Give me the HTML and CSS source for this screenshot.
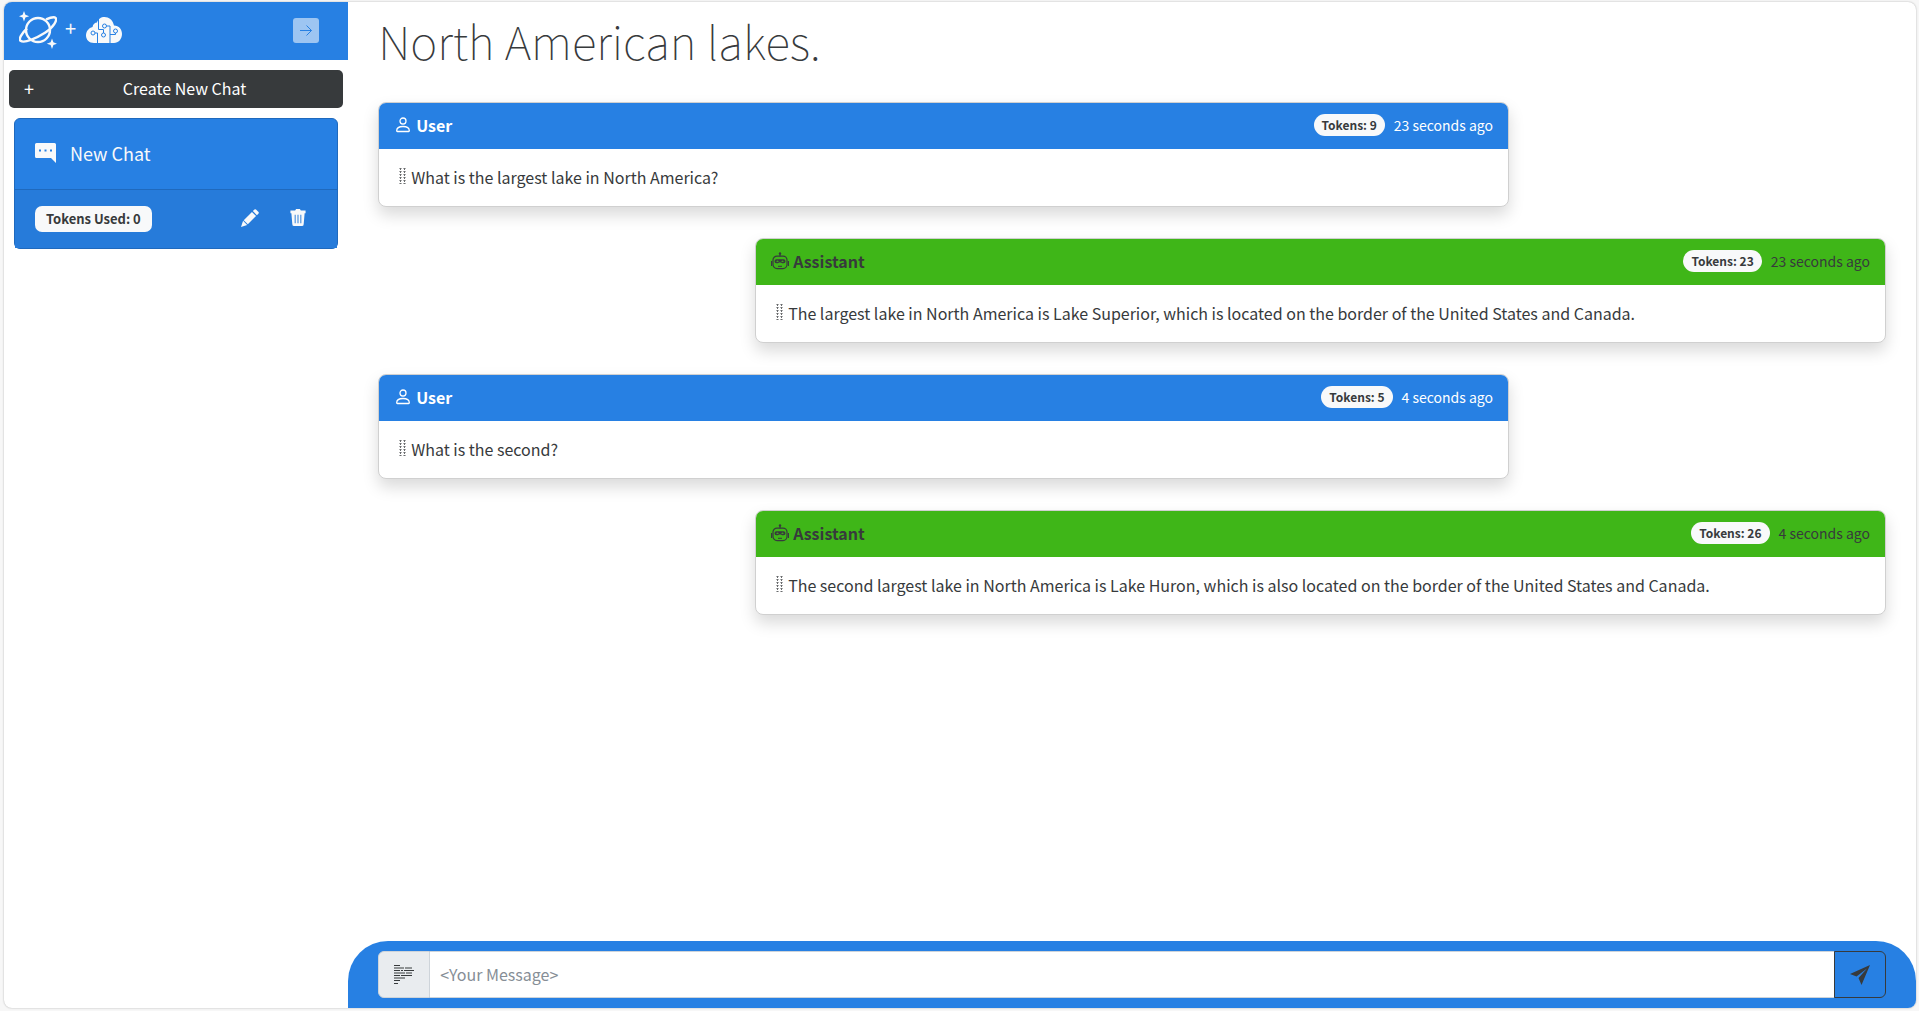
FILE: index.html
```html
<!DOCTYPE html>
<html lang="en">
<head>
<meta charset="utf-8">
<title>Chat</title>
<link rel="stylesheet" href="styles.css">
</head>
<body>
<svg class="sprite" aria-hidden="true">
  <symbol id="person" viewBox="0 0 18 18"><g fill="none" stroke="currentColor" stroke-width="1.300"><circle cx="9" cy="5" r="3"/><path d="M2.700 14.800c0-2.800 2-4.300 6.300-4.300s6.300 1.500 6.300 4.300q0 .7-.7.700H3.400q-.7 0-.7-.7z"/></g></symbol>
  <symbol id="robot" viewBox="0 0 18 18"><g fill="none" stroke="currentColor" stroke-width="1.200"><path d="M9 4.500V1.500"/><rect x="2" y="4.100" width="14" height="12.500" rx="4"/><path d="M.6 9v5M17.400 9v5"/><path d="M7 14.300h4" stroke-width="1"/></g><circle cx="9" cy="1.500" r="1.200"/><path fill-rule="evenodd" d="M5.500 7.300h7a1.900 1.900 0 0 1 0 4c-1.600 0-2.200-.8-3.500-.8s-1.900.8-3.500.8a1.900 1.900 0 0 1 0-4M5 9.200l1.500.8L8 9.200l-1.500-.6zm5 0 1.500.8 1.500-.8-1.500-.6z"/></symbol>
  <symbol id="grip" viewBox="0 0 7 17"><path opacity=".75" d="M1 0h1v2H1zM5 0h1v2H5zM1 3h1v2H1zM5 3h1v2H5zM1 6h1v2H1zM5 6h1v2H5zM1 9h1v2H1zM5 9h1v2H5zM1 12h1v2H1zM5 12h1v2H5zM1 15h1v1H1zM5 15h1v1H5z"/><path opacity=".4" d="M0 0h1v1H0zM2 0h1v1H2zM4 0h1v1H4zM6 0h1v1H6zM0 3h1v1H0zM2 3h1v1H2zM4 3h1v1H4zM6 3h1v1H6zM0 6h1v1H0zM2 6h1v1H2zM4 6h1v1H4zM6 6h1v1H6zM0 9h1v1H0zM2 9h1v1H2zM4 9h1v1H4zM6 9h1v1H6zM0 12h1v1H0zM2 12h1v1H2zM4 12h1v1H4zM6 12h1v1H6zM0 15h1v1H0zM2 15h1v1H2zM4 15h1v1H4zM6 15h1v1H6z"/></symbol>
</svg>
<div class="app">
  <aside class="sidebar">
    <header class="brand">
      <svg class="planet" viewBox="0 0 38 38"><g fill="none" stroke="currentColor" stroke-width="2.400"><circle cx="19" cy="19" r="12"/><path d="M8 17.500C2.500 22.500-.5 28 1.500 29.800c4 2.700 15.500-2.300 24.500-8s12.500-13 10.500-15c-1.500-1.300-5-.3-9.500 1.500"/></g><path fill="currentColor" d="M5 0l1.400 3.800 3.800 1.400-3.800 1.400L5 10.400 3.600 6.600 0 5.200l3.600-1.400zM33 27.500l1.400 3.800 3.800 1.400-3.800 1.400-1.400 3.800-1.400-3.800-3.800-1.400 3.800-1.400z"/></svg>
      <span class="plus">+</span>
      <svg class="brain" viewBox="0 0 36 26"><path fill="currentColor" d="M8 26C3 26 0 22.500 0 18.500 0 14 3 11 6.500 10 7 7 9 5.500 11 5.500 12 2 15 0 18.500 0 23 0 26.500 3 27.500 7c.5 1 .5 1.500.5 1.500C33 8.500 36 12.500 36 17c0 5-3.500 9-8 9z"/><g fill="none" stroke="#2780e3"><path d="M12.500 1v11.500h5V16M11.500 26V16H9M20.500 9H24v17M24 17.500h5.500V16"/><circle cx="7" cy="16" r="2"/><circle cx="17.500" cy="18" r="2"/><circle cx="18.500" cy="9" r="2"/><circle cx="29.500" cy="14" r="2"/></g></svg>
      <button class="collapse" aria-label="Collapse sidebar"><svg viewBox="0 0 26 25"><path fill="none" stroke="#2780e3" d="M7 12.500h11.500M13.500 7.500l5 5-5 5"/></svg></button>
    </header>
    <button class="create"><span class="create-plus">+</span><span class="create-label">Create New Chat</span></button>
    <section class="chat">
      <div class="chat-top">
        <svg class="bubble" viewBox="0 0 21 20"><path fill="currentColor" fill-rule="evenodd" d="M1.500 0h18A1.500 1.500 0 0 1 21 1.500V20l-5-5H1.500A1.500 1.500 0 0 1 0 13.500v-12A1.500 1.500 0 0 1 1.500 0M4 6.500v2h2v-2zm5.500 0v2h2v-2zm5.500 0v2h2v-2z"/></svg>
        <span>New Chat</span>
      </div>
      <div class="chat-tools">
        <span class="badge used">Tokens Used: 0</span>
        <button class="tool" aria-label="Rename"><svg viewBox="0 0 19 19"><path fill="currentColor" d="M14.200.5q.8-.7 1.600 0l2.700 2.700q.7.800 0 1.600L16.800 6.500 12.500 2.200zM11.600 3.100l4.300 4.300-8.700 8.700-4.300-4.300zM2.200 12.500l4.300 4.300L0 19z"/></svg></button>
        <button class="tool" aria-label="Delete"><svg viewBox="0 0 16 19"><path fill="currentColor" fill-rule="evenodd" d="M0 1.500h5L6 0h4l1 1.500h5v3h-1L14 16a2 2 0 0 1-2 2H4a2 2 0 0 1-2-2L1 4.500H0zM4.500 6v9h1V6zm3 0v9h1V6zm3 0v9h1V6z"/></svg></button>
      </div>
    </section>
  </aside>
  <main class="main">
    <div class="thread">
      <h1>North American lakes.</h1>
      <article class="msg user">
        <header><svg class="who"><use href="#person"/></svg><strong>User</strong><span class="badge">Tokens: 9</span><time>23 seconds ago</time></header>
        <p><svg class="grip"><use href="#grip"/></svg>What is the largest lake in North America?</p>
      </article>
      <article class="msg assistant">
        <header><svg class="who"><use href="#robot"/></svg><strong>Assistant</strong><span class="badge">Tokens: 23</span><time>23 seconds ago</time></header>
        <p><svg class="grip"><use href="#grip"/></svg>The largest lake in North America is Lake Superior, which is located on the border of the United States and Canada.</p>
      </article>
      <article class="msg user">
        <header><svg class="who"><use href="#person"/></svg><strong>User</strong><span class="badge">Tokens: 5</span><time>4 seconds ago</time></header>
        <p><svg class="grip"><use href="#grip"/></svg>What is the second?</p>
      </article>
      <article class="msg assistant">
        <header><svg class="who"><use href="#robot"/></svg><strong>Assistant</strong><span class="badge">Tokens: 26</span><time>4 seconds ago</time></header>
        <p><svg class="grip"><use href="#grip"/></svg>The second largest lake in North America is Lake Huron, which is also located on the border of the United States and Canada.</p>
      </article>
    </div>
    <form class="composer">
      <label for="message" aria-label="Your message"><svg viewBox="0 0 20 20"><path fill="none" stroke="currentColor" stroke-width="1.100" d="M0 .5h6M0 3h10m1 0h7M0 5.500h6m1 0h2m1 0h10M0 8h11m1 0h6M0 10.500h6m1 0h11M0 13h11M0 15.500h6M0 18.500h4"/></svg></label>
      <input id="message" type="text" placeholder="&lt;Your Message&gt;">
      <button aria-label="Send"><svg viewBox="0 0 20 20"><path fill="currentColor" d="M20 0 11.500 20 8.500 13 17 3.500 6.500 11.500 0 9z"/></svg></button>
    </form>
  </main>
</div>
</body>
</html>
```
FILE: styles.css
```css
* { box-sizing: border-box; }
body {
  margin: 0;
  padding: 2px 3px 3px 4px;
  height: 100vh;
  background: #f7f7f7;
  color: #373a3c;
  font: 400 16px/24px "Noto Sans CJK SC", sans-serif;
}
button, input { font: inherit; color: inherit; }
button { cursor: pointer; }
svg { flex: none; fill: currentColor; }
.sprite { position: absolute; width: 0; height: 0; }
.app {
  display: flex;
  height: 100%;
  background: #fff;
  border-radius: 8px;
  overflow: hidden;
  box-shadow: 0 0 2px rgba(0, 0, 0, .3);
}
.sidebar { flex: 0 0 18%; }
.brand {
  display: flex;
  align-items: center;
  height: 58px;
  padding: 0 29px 2px 15px;
  background: #2780e3;
  color: #f8f9fa;
}
.planet { width: 38px; height: 38px; }
.plus { margin: 0 10px 5px 8px; font-size: 20px; }
.brain { width: 36px; height: 26px; }
.collapse {
  width: 26px;
  height: 25px;
  margin-left: auto;
  padding: 0;
  border: 0;
  border-radius: 3px;
  background: #9dc5f2;
}
.collapse svg { display: block; }
.create {
  display: flex;
  width: calc(100% - 10px);
  height: 38px;
  margin: 10px 5px;
  padding: 0 8px 2px 15px;
  align-items: center;
  border: 0;
  border-radius: 5px;
  background: #373a3c;
  color: #fff;
}
.create-plus { font-size: 18px; }
.create-label { flex: 1; }
.chat {
  margin: 0 10px;
  border: 1px solid #1f69bd;
  border-radius: 6px;
  background: #2780e3;
  color: #f8f9fa;
}
.chat-top {
  display: flex;
  align-items: center;
  gap: 14px;
  height: 71px;
  padding: 0 20px 2px;
  border-bottom: 1px solid #1f69bd;
  font-size: 18px;
}
.bubble { width: 21px; height: 20px; }
.chat-tools {
  display: flex;
  align-items: center;
  height: 58px;
  padding: 0 30px 0 20px;
  background: #267bda;
}
.badge {
  padding: 0 8px;
  border-radius: 11px;
  background: #f8f9fa;
  color: #373a3c;
  font-size: 12px;
  line-height: 22px;
  font-weight: 700;
}
.used {
  margin-right: auto;
  padding: 0 11px;
  border-radius: 7px;
  font-size: 13px;
  line-height: 26px;
}
.tool { margin-left: 30px; padding: 0 0 2px; border: 0; background: none; }
.tool svg { display: block; height: 18px; width: 18px; }
.main { flex: 1; display: flex; flex-direction: column; min-width: 0; }
.thread {
  flex: 1;
  display: flex;
  flex-direction: column;
  padding: 0 30px;
}
h1 { margin: 8px 0 32px; font-size: 46px; line-height: 60px; font-weight: 100; }
.msg {
  width: 75%;
  margin-bottom: 31px;
  border: 1px solid #d0d0d0;
  border-radius: 8px;
  background: #fff;
  box-shadow: 0 8px 16px rgba(0, 0, 0, .15);
}
.assistant { align-self: flex-end; }
.msg header {
  display: flex;
  align-items: center;
  height: 46px;
  padding: 0 15px 2px;
  border-radius: 7px 7px 0 0;
  background: #2780e3;
  color: #fff;
}
.assistant header { background: #3fb618; color: #373a3c; }
.who { width: 18px; height: 18px; margin-right: 4px; }
.msg .badge { margin-left: auto; }
time { margin-left: 9px; font-size: 14px; }
.msg p { display: flex; align-items: center; height: 57px; margin: 0; padding: 0 20px 2px; }
.grip { width: 7px; height: 17px; margin-right: 5px; }
.composer {
  display: flex;
  height: 67px;
  padding: 10px 30px;
  border-radius: 40px 40px 0 0;
  background: #2780e3;
}
.composer label, .composer button {
  display: grid;
  place-items: center;
  flex: 0 0 52px;
  padding: 0;
  border: 1px solid #ced4da;
  border-radius: 6px 0 0 6px;
  background: #e9ecef;
}
.composer button { border-color: #373a3c; border-radius: 0 6px 6px 0; background: none; }
.composer svg { width: 20px; height: 20px; }
.composer input { flex: 1; min-width: 0; padding: 0 10px 2px; border: 1px solid #ced4da; border-width: 1px 0; background: #fff; }
.composer input::placeholder { color: #868e96; opacity: 1; }
```
